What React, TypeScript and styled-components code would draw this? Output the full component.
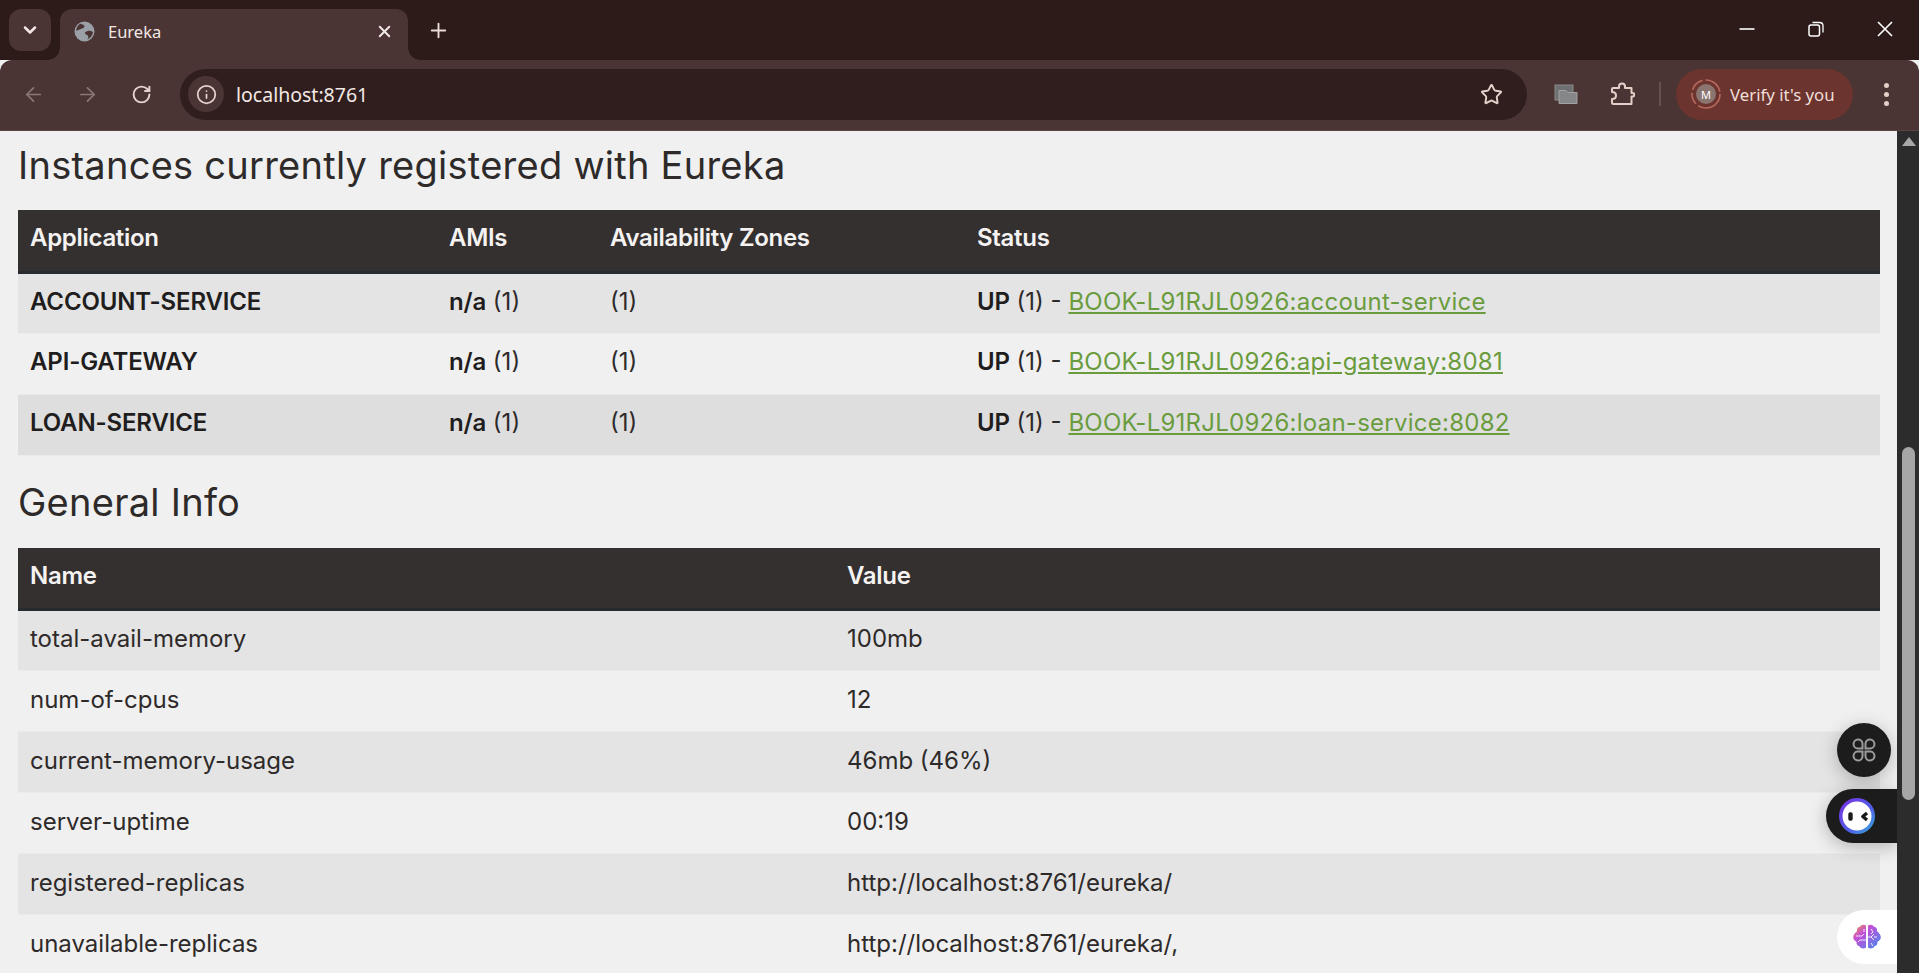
import React from 'react';
import styled, { createGlobalStyle } from 'styled-components';
import { ArrowLeft, ArrowRight, ChevronDown, Info, Plus, RotateCw, Star, X } from 'lucide-react';

const APPS = [
  { name: 'ACCOUNT-SERVICE', link: 'BOOK-L91RJL0926:account-service' },
  { name: 'API-GATEWAY', link: 'BOOK-L91RJL0926:api-gateway:8081' },
  { name: 'LOAN-SERVICE', link: 'BOOK-L91RJL0926:loan-service:8082' },
];

const INFO = [
  ['total-avail-memory', '100mb'],
  ['num-of-cpus', '12'],
  ['current-memory-usage', '46mb (46%)'],
  ['server-uptime', '00:19'],
  ['registered-replicas', 'http://localhost:8761/eureka/'],
  ['unavailable-replicas', 'http://localhost:8761/eureka/,'],
];

const GlobalStyle = createGlobalStyle`
  html, body {
    margin: 0;
    height: 100%;
    overflow: hidden;
    background: #f0f0f0;
  }
`;

function GlobeIcon() {
  return (
    <svg width="21" height="21" viewBox="0 0 20 20">
      <circle cx="10" cy="10" r="9.500" fill="#9aa0a6" />
      <path d="M6 2.500c2 .5 4 1 4 2.500S8 7 6.500 7.500 3 9 2 9c.3-3 2-5.400 4-6.500z" fill="#4a3534" />
      <path d="M18 10.500c-1.500-1-3.500-1.500-5-1s-3 1-2.500 2.500 2.500 1 3 2.500-.5 2.500-1 3c3-1 5.300-3.700 5.500-7z" fill="#4a3534" />
    </svg>
  );
}

function TabGroupIcon() {
  return (
    <svg width="24" height="21" viewBox="0 0 24 21">
      <rect x="1" y="1" width="18" height="15" fill="#6f7071" stroke="#8a8a8a" />
      <path d="M5 6.500h7l2 2h9v11H5z" fill="#858687" stroke="#a2a2a2" />
    </svg>
  );
}

function ExtensionIcon() {
  return (
    <svg width="26" height="26" viewBox="0 0 26 26" fill="none" stroke="#e6cfc8" strokeWidth="2" strokeLinejoin="round">
      <path d="M4 7h6V5.500a3 3 0 0 1 6 0V7h6.500v5h1a1.800 1.800 0 0 1 0 3.600h-1V23H4.500a1.500 1.500 0 0 1-1.500-1.500V18c3 0 4-1.500 4-3.500S5.500 11 3 11V8a1 1 0 0 1 1-1z" />
    </svg>
  );
}

function AvatarRing() {
  return (
    <RingSvg width="30" height="30" viewBox="0 0 30 30">
      <circle cx="15" cy="15" r="14" fill="none" stroke="#b5675c" strokeWidth="1.700" strokeDasharray="30 3 12 3 14 3 20 3" />
    </RingSvg>
  );
}

function CommandIcon() {
  return (
    <svg width="26" height="26" viewBox="0 0 26 26" fill="none" stroke="#9c9c9c" strokeWidth="2">
      <path d="M11.500 11.500H6.500a4.500 4.500 0 1 1 5-5z" />
      <path d="M14.500 11.500h5a4.500 4.500 0 1 0-5-5z" />
      <path d="M11.500 14.500H6.500a4.500 4.500 0 1 0 5 5z" />
      <path d="M14.500 14.500h5a4.500 4.500 0 1 1-5 5z" />
    </svg>
  );
}

function RobotIcon() {
  return (
    <svg width="36" height="36" viewBox="0 0 36 36">
      <defs>
        <linearGradient id="robot-ring" x1="0" y1="0" x2="1" y2="1">
          <stop offset="0" stopColor="#7b2fe0" />
          <stop offset="0.6" stopColor="#4f5fe8" />
          <stop offset="1" stopColor="#33b5d8" />
        </linearGradient>
      </defs>
      <circle cx="18" cy="18" r="18" fill="url(#robot-ring)" />
      <circle cx="18" cy="18" r="14.500" fill="#fff" />
      <rect x="9.300" y="14.300" width="4.400" height="8.400" rx="1.800" fill="#1a1a1a" />
      <path d="M28 15l-4.200 3.500 4.200 3.500" fill="none" stroke="#1a1a1a" strokeWidth="3.400" strokeLinejoin="round" />
    </svg>
  );
}

function BrainIcon() {
  return (
    <svg width="30" height="30" viewBox="0 0 30 30">
      <defs>
        <linearGradient id="brain-fill" x1="0" y1="0" x2="1" y2="1">
          <stop offset="0" stopColor="#f0983c" />
          <stop offset="0.35" stopColor="#c34fd8" />
          <stop offset="1" stopColor="#3f8cf0" />
        </linearGradient>
      </defs>
      <path
        d="M14 3.500c-2-1.500-5-1-6 1.200-2.400.3-3.600 2.500-3 4.500C3 10.500 1 13 1.200 15.500c.2 2 1.500 3.500 3.300 4.200-.3 2.200 1 4 3 4.500 1 2.300 4.500 3 6.500 1.300zM16 3.500c2-1.500 5-1 6 1.200 2.400.3 3.600 2.500 3 4.500 2 1.300 4 3.800 3.800 6.300-.2 2-1.500 3.500-3.300 4.200.3 2.200-1 4-3 4.500-1 2.300-4.500 3-6.500 1.300z"
        fill="url(#brain-fill)"
      />
      <path
        d="M4 14h6l2-2M14 18H8l-2 2M12 7v3M16 15h3l3-3m-3 3 3 3m3-3h-3M19 7l2 3-2 2M19 21l2 3"
        fill="none"
        stroke="#fff"
        strokeWidth="1"
        opacity="0.85"
      />
    </svg>
  );
}

export default function App() {
  return (
    <Window>
      <GlobalStyle />
      <TabStrip>
        <TabListButton>
          <ChevronDown size={20} strokeWidth={3} />
        </TabListButton>
        <Tab>
          <GlobeIcon />
          <TabTitle>Eureka</TabTitle>
          <X size={19} strokeWidth={2.500} />
        </Tab>
        <NewTab>
          <Plus size={23} strokeWidth={2} />
        </NewTab>
        <WindowControls>
          <WindowButton>
            <svg width="16" height="16" viewBox="0 0 16 16">
              <path d="M0.500 8h15" stroke="#fff" strokeWidth="1.600" />
            </svg>
          </WindowButton>
          <WindowButton>
            <svg width="16" height="16" viewBox="0 0 16 16">
              <rect x="1" y="4" width="10.500" height="11" rx="2" fill="none" stroke="#fff" strokeWidth="1.500" />
              <path d="M4.500 1.500h7c2 0 3.500 1.500 3.500 3.500v6.500" fill="none" stroke="#fff" strokeWidth="1.300" />
            </svg>
          </WindowButton>
          <WindowButton>
            <svg width="16" height="16" viewBox="0 0 16 16">
              <path d="M1 1l14 14M15 1L1 15" stroke="#fff" strokeWidth="1.600" />
            </svg>
          </WindowButton>
        </WindowControls>
      </TabStrip>

      <Toolbar>
        <NavButton $dim>
          <ArrowLeft size={23} strokeWidth={1.800} />
        </NavButton>
        <NavButton $dim>
          <ArrowRight size={23} strokeWidth={1.800} />
        </NavButton>
        <NavButton>
          <RotateCw size={21} strokeWidth={2.200} />
        </NavButton>
        <Omnibox>
          <InfoChip>
            <Info size={21} strokeWidth={2} />
          </InfoChip>
          <UrlText>localhost:8761</UrlText>
          <Star size={23} strokeWidth={2} />
        </Omnibox>
        <ToolbarIcon>
          <TabGroupIcon />
        </ToolbarIcon>
        <ToolbarIcon>
          <ExtensionIcon />
        </ToolbarIcon>
        <ToolbarDivider />
        <ProfileChip>
          <Avatar>
            <AvatarRing />M
          </Avatar>
          <span>Verify it's you</span>
        </ProfileChip>
        <MenuDots>
          <i />
          <i />
          <i />
        </MenuDots>
      </Toolbar>

      <Viewport>
        <Page>
          <Heading>Instances currently registered with Eureka</Heading>
          <DataTable>
            <colgroup>
              <col width="419" />
              <col width="161" />
              <col width="367" />
              <col />
            </colgroup>
            <thead>
              <tr>
                <th>Application</th>
                <th>AMIs</th>
                <th>Availability Zones</th>
                <th>Status</th>
              </tr>
            </thead>
            <tbody>
              {APPS.map((app, i) => (
                <Row key={app.name} $shade={i === 0 ? 'odd' : i === 2 ? 'hover' : 'even'}>
                  <td>
                    <Strong>{app.name}</Strong>
                  </td>
                  <td>
                    <Strong>n/a</Strong> (1)
                  </td>
                  <td>(1)</td>
                  <td>
                    <Strong>UP</Strong> (1) - <InstanceLink href="#">{app.link}</InstanceLink>
                  </td>
                </Row>
              ))}
            </tbody>
          </DataTable>

          <SecondHeading>General Info</SecondHeading>
          <DataTable>
            <colgroup>
              <col width="817" />
              <col />
            </colgroup>
            <thead>
              <tr>
                <th>Name</th>
                <th>Value</th>
              </tr>
            </thead>
            <tbody>
              {INFO.map(([name, value], i) => (
                <Row key={name} $shade={i % 2 === 0 ? 'odd' : 'even'}>
                  <td>{name}</td>
                  <td>{value}</td>
                </Row>
              ))}
            </tbody>
          </DataTable>

          <CommandWidget>
            <CommandIcon />
          </CommandWidget>
          <RobotWidget>
            <RobotIcon />
          </RobotWidget>
          <BrainWidget>
            <BrainIcon />
          </BrainWidget>
        </Page>
        <Scrollbar>
          <ScrollArrow />
          <ScrollThumb />
        </Scrollbar>
      </Viewport>
    </Window>
  );
}

const Window = styled.div`
  display: flex;
  flex-direction: column;
  width: 1919px;
  height: 973px;
  overflow: hidden;
  font-family: Inter, 'Noto Sans', sans-serif;
`;

const TabStrip = styled.div`
  display: flex;
  align-items: flex-end;
  height: 60px;
  flex: none;
  padding-left: 9px;
  background: #2d1b19;
  color: #eadcd8;
`;

const TabListButton = styled.div`
  display: flex;
  align-items: center;
  justify-content: center;
  width: 42px;
  height: 42px;
  margin-bottom: 9px;
  border-radius: 12px;
  background: #4a3534;
  color: #f2e7e4;
`;

const Tab = styled.div`
  position: relative;
  display: flex;
  align-items: center;
  width: 348px;
  height: 51px;
  box-sizing: border-box;
  margin-left: 9px;
  padding: 0 14px 6px 14px;
  border-radius: 12px 12px 0 0;
  background: #4a3534;
  color: #f2e7e4;

  &::before,
  &::after {
    content: '';
    position: absolute;
    bottom: 0;
    width: 12px;
    height: 12px;
    background: radial-gradient(circle at var(--cx) 0, #2d1b19 11.500px, #4a3534 12px);
  }
  &::before {
    --cx: 0;
    left: -12px;
  }
  &::after {
    --cx: 100%;
    right: -12px;
  }
`;

const TabTitle = styled.span`
  flex: 1;
  margin-left: 13px;
  font-size: 16.500px;
  font-family: 'Noto Sans', sans-serif;
`;

const NewTab = styled.div`
  display: flex;
  align-items: center;
  justify-content: center;
  width: 36px;
  height: 36px;
  margin: 0 0 12px 12px;
  color: #eadcd8;
`;

const WindowControls = styled.div`
  display: flex;
  align-self: flex-start;
  margin-left: auto;
  height: 60px;
`;

const WindowButton = styled.div`
  display: flex;
  align-items: center;
  justify-content: center;
  width: 69px;
  height: 58px;
`;

const Toolbar = styled.div`
  display: flex;
  align-items: center;
  height: 71px;
  flex: none;
  box-sizing: border-box;
  padding: 0 0 2px 11px;
  border-radius: 12px 12px 0 0;
  border-bottom: 1px solid #5b4341;
  background: #4a3534;
  color: #e6d3cd;
`;

const NavButton = styled.div<{ $dim?: boolean }>`
  display: flex;
  align-items: center;
  justify-content: center;
  width: 44px;
  height: 40px;
  flex: none;
  margin-right: 10px;
  color: ${({ $dim }) => ($dim ? '#8b7875' : '#e6d3cd')};
`;

const Omnibox = styled.div`
  display: flex;
  align-items: center;
  width: 1347px;
  height: 51px;
  flex: none;
  box-sizing: border-box;
  margin: 0 11px 0 7px;
  padding: 0 24px 0 8px;
  border-radius: 26px;
  background: #2f1e1d;
`;

const InfoChip = styled.div`
  display: flex;
  align-items: center;
  justify-content: center;
  width: 36px;
  height: 36px;
  border-radius: 18px;
  background: #4a3534;
`;

const UrlText = styled.span`
  flex: 1;
  margin-left: 12px;
  font-family: 'Noto Sans', sans-serif;
  font-size: 19.500px;
  color: #f4e9e5;
`;

const ToolbarIcon = styled.div`
  display: flex;
  align-items: center;
  justify-content: center;
  width: 56px;
  height: 40px;
  flex: none;
`;

const ToolbarDivider = styled.div`
  width: 2px;
  height: 24px;
  flex: none;
  margin: 0 15px 0 9px;
  background: #66504e;
`;

const ProfileChip = styled.div`
  display: flex;
  align-items: center;
  width: 177px;
  height: 51px;
  flex: none;
  box-sizing: border-box;
  padding-left: 20px;
  border-radius: 26px;
  background: #6b342e;
  font-family: 'Noto Sans', sans-serif;
  font-size: 16.800px;
  color: #f0dfda;
`;

const Avatar = styled.div`
  position: relative;
  display: flex;
  align-items: center;
  justify-content: center;
  width: 20px;
  height: 20px;
  margin-right: 14px;
  border-radius: 50%;
  background: #8a7570;
  font-size: 11px;
  color: #fff;
`;

const RingSvg = styled.svg`
  position: absolute;
  top: -5px;
  left: -5px;
`;

const MenuDots = styled.div`
  display: flex;
  flex-direction: column;
  align-items: center;
  gap: 4px;
  width: 33px;
  flex: none;
  margin-left: 17px;

  i {
    width: 5px;
    height: 5px;
    border-radius: 50%;
    background: #e6cfc8;
  }
`;

const Viewport = styled.div`
  display: flex;
  flex: 1;
  min-height: 0;
`;

const Page = styled.main`
  position: relative;
  flex: 1;
  min-width: 0;
  overflow: hidden;
  box-sizing: border-box;
  padding: 0 17px 0 18px;
  background: #f0f0f0;
  color: #2e2a2a;
`;

const Heading = styled.h1`
  margin: 8px 0 19px;
  font-size: 38px;
  line-height: 52px;
  font-weight: 400;
  letter-spacing: 0.26px;
  color: #2e2a2a;
`;

const SecondHeading = styled(Heading)`
  margin: 20px 0 20px;
`;

const DataTable = styled.table`
  width: 100%;
  table-layout: fixed;
  border-collapse: collapse;
  font-size: 24px;

  th {
    height: 62px;
    box-sizing: border-box;
    padding: 0 12px 5px;
    text-align: left;
    font-weight: 600;
    letter-spacing: -0.3px;
    color: #f5f3f2;
    background: #353030;
    border-bottom: 3px solid #272a2e;
  }

  td {
    height: 61px;
    box-sizing: border-box;
    padding: 0 12px 4px;
    white-space: nowrap;
  }
`;

const Row = styled.tr<{ $shade: 'odd' | 'even' | 'hover' }>`
  background: ${({ $shade }) => ($shade === 'odd' ? '#e4e4e4' : $shade === 'hover' ? '#dedede' : '#f0f0f0')};
  border-bottom: 1px solid #ebebeb;
`;

const Strong = styled.strong`
  font-weight: 600;
  letter-spacing: -0.15px;
  color: #1f1d1d;
`;

const InstanceLink = styled.a`
  letter-spacing: 0.25px;
  color: #6a9c3e;
`;

const FloatingWidget = styled.div`
  position: absolute;
  display: flex;
  align-items: center;
  width: 54px;
  height: 54px;
  box-shadow: 0 4px 18px rgba(0, 0, 0, 0.25);
`;

const CommandWidget = styled(FloatingWidget)`
  top: 592px;
  right: 6px;
  justify-content: center;
  border-radius: 50%;
  background: #1c1c1c;
`;

const RobotWidget = styled(FloatingWidget)`
  top: 658px;
  right: 0;
  width: 71px;
  padding-left: 13px;
  box-sizing: border-box;
  border-radius: 27px 0 0 27px;
  background: #1c1c1c;
`;

const BrainWidget = styled(FloatingWidget)`
  top: 779px;
  right: 0;
  width: 60px;
  padding-left: 15px;
  box-sizing: border-box;
  border-radius: 27px 0 0 27px;
  background: #fff;
  box-shadow: none;
`;

const Scrollbar = styled.aside`
  position: relative;
  width: 22px;
  flex: none;
  background: #2c2c2c;
`;

const ScrollArrow = styled.div`
  position: absolute;
  top: 6px;
  left: 5px;
  width: 0;
  height: 0;
  border-left: 7px solid transparent;
  border-right: 7px solid transparent;
  border-bottom: 9px solid #a8a8a8;
`;

const ScrollThumb = styled.div`
  position: absolute;
  top: 316px;
  left: 5px;
  width: 13px;
  height: 353px;
  border-radius: 7px;
  background: #a6a6a6;
`;
